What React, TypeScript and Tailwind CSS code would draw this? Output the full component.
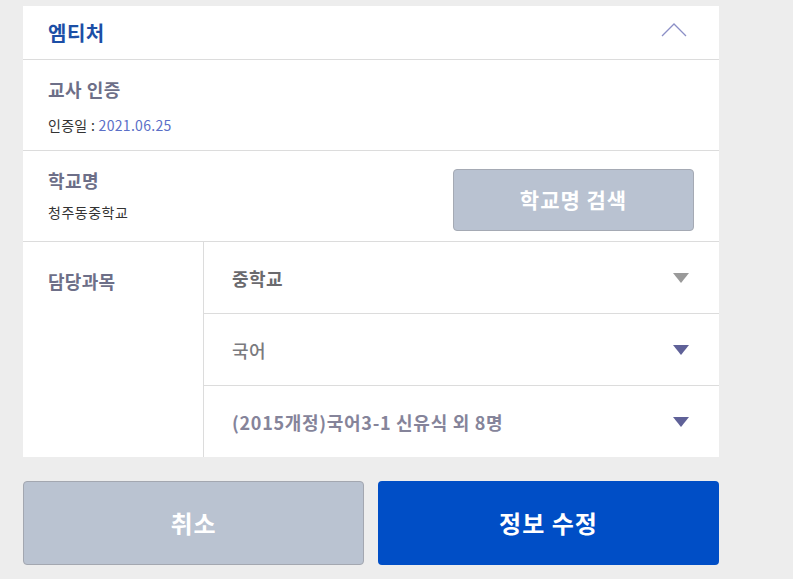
import React from 'react';

const FONT = "font-['Noto_Sans_CJK_KR','Noto_Sans',sans-serif]";

const Caret: React.FC<{ color: string }> = ({ color }) => (
  <svg width="16" height="10" viewBox="0 0 16 10">
    <polygon points="0,0 16,0 8,10" fill={color} />
  </svg>
);

const SubjectRow: React.FC<{ label: string; textClass: string; caret: string; last?: boolean }> = ({
  label,
  textClass,
  caret,
  last,
}) => (
  <div
    className={`flex items-center justify-between pl-[28px] pr-[30px] ${
      last ? 'h-[71px]' : 'h-[72px] border-b border-[#dcdcdc]'
    }`}
  >
    <span className={`text-[18px] leading-none ${textClass}`}>{label}</span>
    <Caret color={caret} />
  </div>
);

export default function App() {
  return (
    <div className={`min-h-[579px] bg-[#ededed] pt-[6px] pl-[23px] ${FONT}`}>
      <div className="w-[696px] bg-white">
        {/* header */}
        <div className="flex h-[54px] items-center justify-between border-b border-[#dcdcdc] pl-[25px] pr-[32px]">
          <h2 className="text-[20px] font-bold leading-none tracking-[0.5px] text-[#1c4fa6]">엠티처</h2>
          <svg width="26" height="14" viewBox="0 0 26 14" className="mt-[-6px]">
            <polyline points="1,13 13,1 25,13" fill="none" stroke="#8b8fc6" strokeWidth="1.3" />
          </svg>
        </div>

        {/* teacher cert */}
        <div className="h-[91px] border-b border-[#dcdcdc] pl-[25px] pt-[20px]">
          <p className="text-[18px] font-bold leading-none tracking-[0.5px] text-[#6d6f88]">교사 인증</p>
          <p className="mt-[20px] text-[14px] leading-none tracking-[0.3px] text-[#333]">
            인증일 : <span className="text-[#5b6fc7]">2021.06.25</span>
          </p>
        </div>

        {/* school */}
        <div className="flex h-[91px] items-center justify-between border-b border-[#dcdcdc] pl-[25px] pr-[25px]">
          <div className="mt-[-2px]">
            <p className="text-[18px] font-bold leading-none tracking-[0.5px] text-[#6d6f88]">학교명</p>
            <p className="mt-[16px] text-[14px] leading-none tracking-[0.5px] text-[#333]">청주동중학교</p>
          </div>
          <button className="mt-[8px] flex h-[62px] w-[241px] items-center justify-center rounded-[4px] border border-[#a5aab4] bg-[#b9c2d1] text-[21px] font-bold tracking-[1px] text-white">
            학교명 검색
          </button>
        </div>

        {/* subjects */}
        <div className="flex">
          <div className="w-[181px] border-r border-[#dcdcdc] pl-[25px] pt-[30px]">
            <p className="text-[18px] font-bold leading-none tracking-[0.3px] text-[#6d6f88]">담당과목</p>
          </div>
          <div className="flex-1">
            <SubjectRow label="중학교" textClass="font-semibold tracking-[0.5px] text-[#6a6a6e]" caret="#9a9a9a" />
            <SubjectRow label="국어" textClass="font-medium tracking-[0.5px] text-[#7a7a7e]" caret="#5f6198" />
            <SubjectRow
              label="(2015개정)국어3-1 신유식 외 8명"
              textClass="font-bold tracking-[0.7px] text-[#85849a]"
              caret="#5f6198"
              last
            />
          </div>
        </div>
      </div>

      {/* actions */}
      <div className="mt-[24px] flex w-[696px] gap-[14px] pb-[14px]">
        <button className="flex h-[84px] w-[341px] items-center justify-center rounded-[4px] border border-[#a3a7b0] bg-[#bac3d1] text-[24px] font-bold tracking-[1px] text-white">
          취소
        </button>
        <button className="flex h-[84px] w-[341px] items-center justify-center rounded-[4px] bg-[#004ec6] text-[24px] font-bold tracking-[1px] text-white">
          정보 수정
        </button>
      </div>
    </div>
  );
}
